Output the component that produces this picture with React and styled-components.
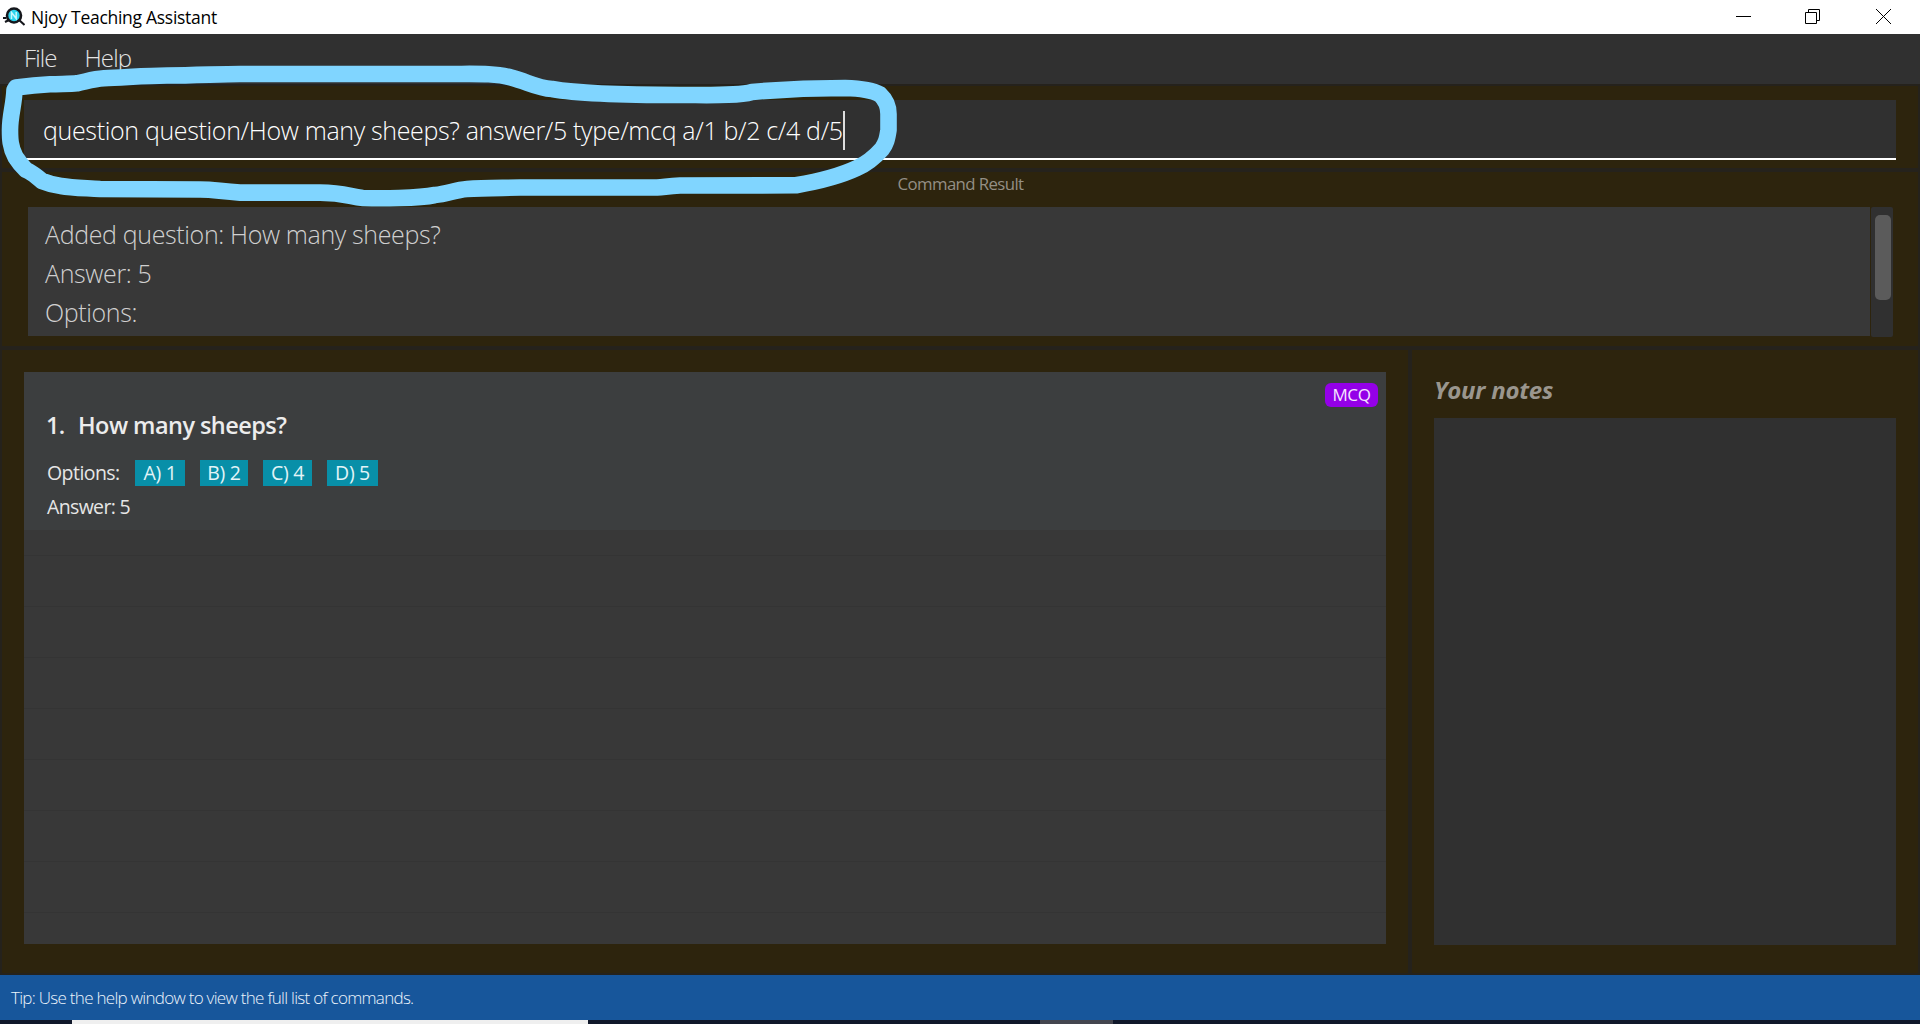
import React from "react";
import styled, { createGlobalStyle } from "styled-components";

const color = {
  base: "#2d240d",
  seam: "#25221c",
  bar: "#303030",
  panel: "#383838",
  item: "#3c3e3f",
  tip: "#17569b",
};

const GlobalStyle = createGlobalStyle`
  body { margin: 0; background: ${color.base}; }
  * { box-sizing: border-box; }
`;

const Window = styled.div`
  display: flex;
  flex-direction: column;
  position: relative;
  width: 1920px;
  height: 1024px;
  overflow: hidden;
  background: ${color.base};
  font-family: "Open Sans", "Noto Sans", sans-serif;
  font-weight: 300;
`;

const Text = styled.span`
  font-size: ${(p) => p.$size}px;
  line-height: ${(p) => p.$line}px;
  letter-spacing: ${(p) => p.$track || 0}px;
  font-weight: ${(p) => p.$weight || 300};
  font-style: ${(p) => (p.$italic ? "italic" : "normal")};
  color: ${(p) => p.$color};
  white-space: pre;
`;

const TitleBar = styled.header`
  display: flex;
  align-items: center;
  flex: 0 0 34px;
  padding: 0 28px 0 3px;
  background: #fff;
`;

const AppIcon = styled.svg`
  width: 22px;
  height: 20px;
  margin: -2px 6px 0 0;
`;

const WindowControls = styled.div`
  display: grid;
  grid-template-columns: 69px 71px 16px;
  margin-left: auto;
`;

const ControlIcon = styled.svg`
  width: 16px;
  height: 16px;
  fill: none;
  stroke: #000;
  stroke-width: 1;
`;

const MenuBar = styled.nav`
  display: flex;
  flex: 0 0 50px;
  gap: 28px;
  padding-left: 24px;
  background: ${color.bar};
`;

const Section = styled.section`
  flex: 0 0 ${(p) => p.$height}px;
  display: flex;
  flex-direction: column;
  border: 2px solid ${color.seam};
  padding: ${(p) => p.$padding};
`;

const CommandField = styled.div`
  display: flex;
  align-items: center;
  height: 60px;
  padding: 2px 0 0 19px;
  background: ${color.bar};
  border-bottom: 2px solid #fff;
`;

const Caret = styled.span`
  width: 2px;
  height: 39px;
  background: #ddd;
`;

const Caption = styled.div`
  display: flex;
  justify-content: center;
  height: 33px;
`;

const ResultBox = styled.div`
  display: flex;
  height: 130px;
`;

const ResultText = styled.div`
  display: flex;
  flex-direction: column;
  width: 1842px;
  height: 129px;
  padding: 8px 0 0 17px;
  background: ${color.panel};
  overflow: hidden;
`;

const ScrollTrack = styled.div`
  width: 22px;
  height: 130px;
  margin-left: 1px;
  padding: 8px 2px 0 4px;
  border-radius: 2px;
  background: ${color.bar};
`;

const ScrollThumb = styled.div`
  height: 85px;
  border-radius: 5px;
  background: #5b5b5b;
`;

const Split = styled.main`
  display: grid;
  grid-template-columns: 1408px 4px 1fr;
  flex: 0 0 627px;
  border: solid ${color.seam};
  border-width: 2px 0 2px 0;
`;

const Pane = styled.div`
  display: flex;
  flex-direction: column;
  padding: ${(p) => p.$padding};
  border: 0 solid ${color.seam};
  border-left-width: ${(p) => (p.$edge === "left" ? 2 : 0)}px;
  border-right-width: ${(p) => (p.$edge === "right" ? 2 : 0)}px;
`;

const Divider = styled.div`
  background: ${color.seam};
`;

const List = styled.div`
  height: 572px;
  background: ${color.panel};
`;

const ListItem = styled.div`
  display: flex;
  justify-content: space-between;
  height: 158px;
  padding-left: 23px;
  background: ${color.item};
`;

const ItemBody = styled.div`
  display: flex;
  flex-direction: column;
  padding-top: 37px;
`;

const Heading = styled.div`
  display: flex;
  height: 51px;
  margin-left: -1px;
`;

const Index = styled.div`
  width: 32px;
`;

const OptionRow = styled.div`
  display: flex;
  gap: 15px;
  height: 34px;
`;

const OptionLabel = styled.div`
  width: 73px;
`;

const OptionChip = styled.div`
  display: flex;
  justify-content: center;
  width: ${(p) => p.$width}px;
  height: 26px;
  background: #088fa8;
`;

const TypeBadge = styled.div`
  display: flex;
  justify-content: center;
  width: 53px;
  height: 24px;
  margin: 11px 8px 0 0;
  border-radius: 6px;
  background: #9400e8;
`;

const EmptyRow = styled.div`
  height: ${(p) => p.$height}px;
  border-bottom: 1px solid #343434;
`;

const Notes = styled.div`
  height: 527px;
  margin-top: 12px;
  background: ${color.bar};
`;

const TipBar = styled.footer`
  flex: 0 0 45px;
  display: flex;
  padding-left: 11px;
  background: ${color.tip};
`;

const Taskbar = styled.div`
  display: flex;
  flex: 0 0 4px;
  background: #10182a;
`;

const TaskSegment = styled.div`
  width: ${(p) => p.$width}px;
  margin-left: ${(p) => p.$before}px;
  background: ${(p) => p.$fill};
`;

const Marker = styled.svg`
  position: absolute;
  left: 0;
  top: 0;
  width: 920px;
  height: 220px;
  fill: none;
  stroke: #80d5ff;
  stroke-width: 16.6;
  stroke-linejoin: round;
  pointer-events: none;
`;

const options = [
  { label: "A) 1", width: 50 },
  { label: "B) 2", width: 48 },
  { label: "C) 4", width: 49 },
  { label: "D) 5", width: 51 },
];

const result = ["Added question: How many sheeps?", "Answer: 5", "Options:"];

const emptyRows = [26, 51, 51, 51, 51, 51, 51, 51];

export default function App() {
  return (
    <>
      <GlobalStyle />
      <Window>
        <TitleBar>
          <AppIcon viewBox="0 0 22 20">
            <path d="M0 12H3M15 13L21.5 19M2 16L6 14" stroke="#15171c" strokeWidth="2" />
            <circle cx="11" cy="9.500" r="7" fill="#2bd4ee" stroke="#15171c" strokeWidth="2.6" />
            <path d="M8.5 13V6.5L13.2 12.5V6" fill="none" stroke="#c9f8ff" strokeWidth="1.5" />
          </AppIcon>
          <Text $size={17.5} $line={34} $weight={400} $track={-0.28} $color="#000">Njoy Teaching Assistant</Text>
          <WindowControls>
            <ControlIcon viewBox="0 0 16 16"><path d="M0 7.500H15" /></ControlIcon>
            <ControlIcon viewBox="0 0 16 16"><path d="M0.5 3.5H11.5V14.5H0.5ZM3.5 3.5V0.5H14.5V11.5H11.5" /></ControlIcon>
            <ControlIcon viewBox="0 0 16 16"><path d="M0 0L15 15M15 0L0 15" /></ControlIcon>
          </WindowControls>
        </TitleBar>

        <MenuBar>
          <Text $size={24} $line={48} $track={-0.9} $color="#e4e4e4">File</Text>
          <Text $size={24} $line={48} $track={-0.9} $color="#e4e4e4">Help</Text>
        </MenuBar>

        <Section $height={86} $padding="14px 22px 0">
          <CommandField>
            <Text $size={25} $line={56} $track={-0.34} $color="#fff">question question/How many sheeps? answer/5 type/mcq a/1 b/2 c/4 d/5</Text>
            <Caret />
          </CommandField>
        </Section>

        <Section $height={178} $padding="2px 25px 0 26px">
          <Caption>
            <Text $size={16.8} $line={20} $track={-0.6} $weight={400} $color="#948f85">Command Result</Text>
          </Caption>
          <ResultBox>
            <ResultText>
              {result.map((line) => (
                <Text key={line} $size={25} $line={39} $track={-0.36} $color="#d0d0d0">{line}</Text>
              ))}
            </ResultText>
            <ScrollTrack><ScrollThumb /></ScrollTrack>
          </ResultBox>
        </Section>

        <Split>
          <Pane $edge="left" $padding="22px 22px 0">
            <List>
              <ListItem>
                <ItemBody>
                  <Heading>
                    <Index><Text $size={23.5} $line={32} $weight={600} $track={-0.8} $color="#ececec">1.</Text></Index>
                    <Text $size={23.5} $line={32} $weight={600} $track={-0.55} $color="#ececec">How many sheeps?</Text>
                  </Heading>
                  <OptionRow>
                    <OptionLabel>
                      <Text $size={19.5} $line={26} $track={-0.55} $weight={400} $color="#e6e6e6">Options:</Text>
                    </OptionLabel>
                    {options.map((o) => (
                      <OptionChip key={o.label} $width={o.width}>
                        <Text $size={19.5} $line={26} $track={-0.3} $weight={400} $color="#e2f4f7">{o.label}</Text>
                      </OptionChip>
                    ))}
                  </OptionRow>
                  <Text $size={19.5} $line={26} $track={-0.65} $weight={400} $color="#e6e6e6">Answer: 5</Text>
                </ItemBody>
                <TypeBadge>
                  <Text $size={17} $line={23} $track={-0.4} $weight={400} $color="#f6e6ff">MCQ</Text>
                </TypeBadge>
              </ListItem>
              {emptyRows.map((h, i) => <EmptyRow key={i} $height={h} />)}
            </List>
          </Pane>
          <Divider />
          <Pane $edge="right" $padding="24px 22px 0">
            <Text $size={24} $line={32} $weight={700} $italic $track={-0.25} $color="#9a968e">Your notes</Text>
            <Notes />
          </Pane>
        </Split>

        <TipBar>
          <Text $size={17} $line={45} $track={-0.71} $color="#edf4fb">Tip: Use the help window to view the full list of commands.</Text>
        </TipBar>
        <Taskbar>
          <TaskSegment $before={72} $width={516} $fill="#efefef" />
          <TaskSegment $before={452} $width={73} $fill="#43454f" />
        </Taskbar>

        <Marker viewBox="0 0 920 220">
          <path d="M16 87.500C28 86 38 85 50 84.300C62 83.800 70 84 77 83.300C88 81 94 79 104 78.300C125 77.500 148 75.500 167 75.500C195 75.500 220 74 240 74L450 74C475 74 495 73 511 77.500C528 82 537 88 552 89C580 94 630 95 680 95C710 95 738 96 752 92C775 90 820 88 845 88C862 88.500 874 91 880 94.500C887 101 888.500 107 888.500 114L888.500 130C887 140 886 143 882 149C874 158 866 164 857 168C840 176 815 182 796 185.300L680 185.500C668 186 665 187 657 187.500L520 187.500C500 188 483 188 467 189C455 190 447 194 435 195C418 198.500 380 198.500 363 198C350 197 345 192.600 320 192.600L240 192.600C220 191.500 215 189.500 200 189.500L100 189C85 188 72 188 61 186C54 185 48 183.500 42 181C36 176.500 32 172 26 170C21 165 18 161 15.500 157C10 147 10 138 10 130C10 115 14 105 14.500 90Z" />
        </Marker>
      </Window>
    </>
  );
}
